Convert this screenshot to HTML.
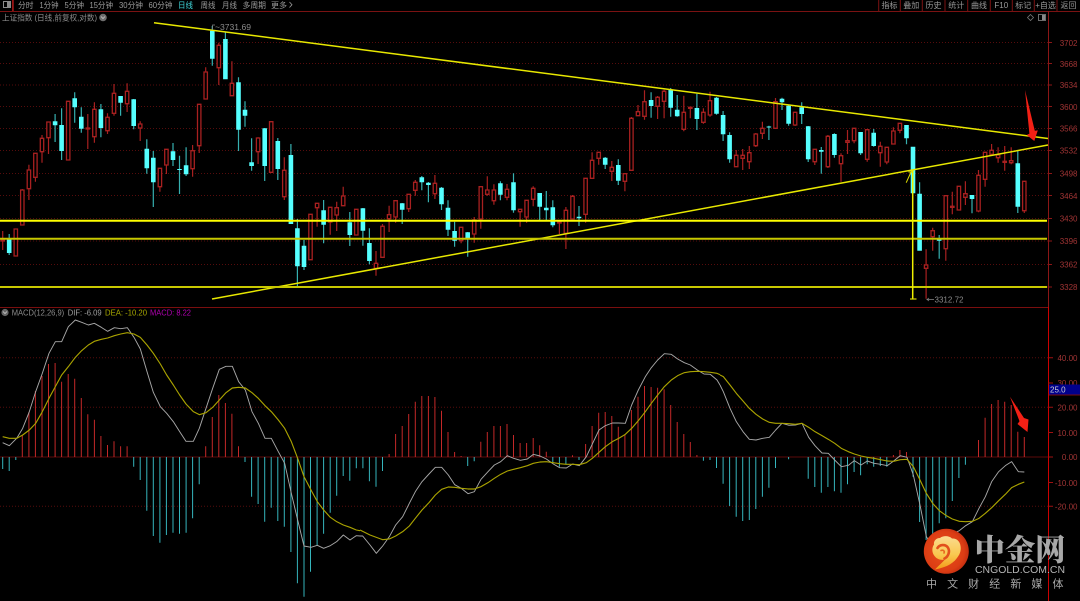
<!DOCTYPE html>
<html><head><meta charset="utf-8"><title>上证指数 MACD</title>
<style>
html,body{margin:0;padding:0;background:#000;width:1080px;height:601px;overflow:hidden}
svg{display:block}
text{font-family:"Liberation Sans","Noto Sans CJK SC",sans-serif;font-size:8px;fill:#999}
.a{fill:#a03434;text-anchor:end}
.b{text-anchor:middle}
</style></head><body>
<svg width="1080" height="601" viewBox="0 0 1080 601" xmlns="http://www.w3.org/2000/svg">
<defs>
<radialGradient id="lg" cx=".45" cy=".5" r=".55"><stop offset="0" stop-color="#e8501c"/><stop offset=".8" stop-color="#dc3d14"/><stop offset="1" stop-color="#c42e10"/></radialGradient>
<linearGradient id="ly" x1="0" y1="0" x2="0" y2="1"><stop offset="0" stop-color="#fbdc90"/><stop offset=".55" stop-color="#f9c850"/><stop offset="1" stop-color="#f39a18"/></linearGradient>
</defs>
<rect width="1080" height="601" fill="#000"/>
<!-- grid -->
<path d="M0 42.5H1048M0 63.5H1048M0 85H1048M0 106.5H1048M0 128.5H1048M0 150.5H1048M0 173.5H1048M0 195.5H1048M0 218.5H1048M0 241H1048M0 264.5H1048M0 287H1048M0 357.7H1048M0 407.3H1048M0 506.3H1048" stroke="#560c0c" stroke-width="1" stroke-dasharray="1 2" fill="none"/>
<path d="M0 457H1048" stroke="#5c0a0a" stroke-width="1"/>
<path d="M0 307.5H1048" stroke="#7a0e0e" stroke-width="1"/>
<path d="M0 11.5H1080" stroke="#7a1212" stroke-width="1"/>
<path d="M1048.5 11V307" stroke="#8b1616" stroke-width="1"/>
<path d="M1048.5 307V601" stroke="#cc0000" stroke-width="1"/>
<path d="M1048 42.5h4M1048 63.5h4M1048 85h4M1048 106.5h4M1048 128.5h4M1048 150.5h4M1048 173.5h4M1048 195.5h4M1048 218.5h4M1048 241h4M1048 264.5h4M1048 287h4" stroke="#8b1616" stroke-width="1"/>
<path d="M1048 357.7h5M1048 383h5M1048 407.3h5M1048 432.5h5M1048 457h5M1048 482.5h5M1048 506.3h5" stroke="#a01010" stroke-width="1"/>
<!-- top bar -->
<path d="M13.5 0V11M878.7 0V11M900.3 0V11M922.3 0V11M945 0V11M967.7 0V11M990.3 0V11M1012.3 0V11M1034.3 0V11M1057 0V11" stroke="#7a1212" stroke-width="1"/>
<path d="M12.5 0V11" stroke="#9a1212" stroke-width="1"/>
<rect x="3.5" y="1.5" width="7" height="6" fill="none" stroke="#8a8a8a"/><rect x="7" y="2" width="3" height="5" fill="#888"/>
<text x="18" y="8" textLength="15.5" lengthAdjust="spacingAndGlyphs">分时</text>
<text x="39.5" y="8" textLength="19" lengthAdjust="spacingAndGlyphs">1分钟</text>
<text x="64.5" y="8" textLength="19.5" lengthAdjust="spacingAndGlyphs">5分钟</text>
<text x="89.5" y="8" textLength="23.5" lengthAdjust="spacingAndGlyphs">15分钟</text>
<text x="119" y="8" textLength="24" lengthAdjust="spacingAndGlyphs">30分钟</text>
<text x="148.5" y="8" textLength="24" lengthAdjust="spacingAndGlyphs">60分钟</text>
<text x="178" y="8" textLength="15" lengthAdjust="spacingAndGlyphs" style="fill:#3fd8dc">日线</text>
<text x="200.5" y="8" textLength="15" lengthAdjust="spacingAndGlyphs">周线</text>
<text x="222" y="8" textLength="15" lengthAdjust="spacingAndGlyphs">月线</text>
<text x="242.5" y="8" textLength="23.5" lengthAdjust="spacingAndGlyphs">多周期</text>
<text x="271" y="8" textLength="16" lengthAdjust="spacingAndGlyphs">更多</text>
<path d="M289.5 2L292 4.7 289.5 7.5" stroke="#999" fill="none" stroke-width=".8"/>
<text class="b" x="889.5" y="8">指标</text>
<text class="b" x="911.3" y="8">叠加</text>
<text class="b" x="933.5" y="8">历史</text>
<text class="b" x="956.3" y="8">统计</text>
<text class="b" x="979" y="8">曲线</text>
<text class="b" x="1001.3" y="8">F10</text>
<text class="b" x="1023.3" y="8">标记</text>
<text class="b" x="1045.6" y="8">+自选</text>
<text class="b" x="1068.5" y="8">返回</text>
<text x="2" y="20.5" textLength="95" lengthAdjust="spacingAndGlyphs" style="fill:#8c8c8c">上证指数 (日线,前复权,对数)</text>
<circle cx="103" cy="17.5" r="3.8" fill="#6e6e6e"/><path d="M101 16.5l2 2 2-2" stroke="#ccc" stroke-width=".8" fill="none"/>
<path d="M1030.5 14.5l3 3-3 3-3-3z" fill="none" stroke="#777" stroke-width=".8"/>
<rect x="1038.5" y="14.5" width="7" height="6" fill="none" stroke="#888" stroke-width=".8"/><rect x="1042" y="15" width="3" height="5" fill="#888"/>
<!-- price labels -->
<text class="a" x="1077.5" y="46">3702</text><text class="a" x="1077.5" y="67">3668</text><text class="a" x="1077.5" y="88">3634</text><text class="a" x="1077.5" y="110">3600</text><text class="a" x="1077.5" y="131.5">3566</text><text class="a" x="1077.5" y="153.5">3532</text><text class="a" x="1077.5" y="176.5">3498</text><text class="a" x="1077.5" y="199">3464</text><text class="a" x="1077.5" y="221.5">3430</text><text class="a" x="1077.5" y="244">3396</text><text class="a" x="1077.5" y="267.5">3362</text><text class="a" x="1077.5" y="290">3328</text>
<text class="a" x="1077.5" y="361">40.00</text><text class="a" x="1077.5" y="386">30.00</text><text class="a" x="1077.5" y="410.5">20.00</text><text class="a" x="1077.5" y="436">10.00</text><text class="a" x="1077.5" y="460">0.00</text><text class="a" x="1077.5" y="486">-10.00</text><text class="a" x="1077.5" y="509.5">-20.00</text>
<rect x="1049" y="384.5" width="31" height="10" fill="#00008c"/><path d="M1049 395h31" stroke="#7a1010"/>
<text x="1050" y="392.5" style="fill:#cfcfcf">25.0</text>

<!-- red wicks -->
<path fill="none" stroke="#a82020" stroke-width="1.2" d="M2.7 231V250M22.3 189V225M28.9 164.7V200M35.4 153V181.7M42 135V162.7M48.5 122V154M87.8 114V149M94.4 102.3V142.7M107.5 113.3V134M114 84V115.7M127.1 83.3V112M140.2 121.3V141M159.9 168V191.7M166.4 149V174M192.6 145V176.7M199.2 104V153M205.7 67.3V99M218.8 42.7V85M231.9 61.3V95.7M258.1 137.3V164M284.3 157.3V200M317.1 203V226.7M330.2 207V234.7M336.7 201.7V231M343.2 186.7V205.7M376 251V275.7M382.5 224V257M389.1 205.7V232M395.6 200.7V222.7M408.7 194V212M415.3 180V195.7M434.9 175V199M461.1 227V243.3M474.2 217V242.7M480.8 186.7V228.7M487.3 176.3V195.7M493.9 184.3V204.7M507 184V200.3M520.1 209V226.7M526.6 200V222.7M533.2 186.3V206.3M559.4 221.7V234M565.9 207V249M572.5 195V219M585.6 178V222.7M592.1 152.3V178M598.7 152V164.7M611.8 161V181M624.9 173.7V191.3M631.4 117V170M638 105V115.7M644.5 90.3V119.7M657.6 96V119M664.1 89.7V118.3M683.8 95.7V131.3M690.3 107V118.3M703.4 108.3V123.7M710 91.7V116.7M736.2 150V167M742.7 149V170M749.3 146V169M755.8 133V147M762.4 121.7V139M775.5 98V128M795.1 111.7V126M814.8 149V165M827.9 135V168M841 153.3V181.7M847.5 130V154M854.1 128V143.3M867.2 129.7V161.7M880.3 141.7V166.7M886.8 147V164.3M893.4 127.3V144M899.9 123V133.3M926.1 249.3V298.7M932.7 227.7V250.7M945.8 195.7V260.7M952.3 191.7V214.3M965.4 181.3V205M978.5 170V212.3M985.1 152V186.7M991.6 144V155.7M998.1 147.3V162.7M1004.7 146V170.7M1011.2 147.3V164.3M1024.3 181V213"/>
<!-- cyan wicks -->
<path fill="none" stroke="#36b0b0" stroke-width="1.2" d="M9.2 234V255M55.1 114V142M61.6 108.3V160M74.7 92.3V122.7M81.3 107.3V132.7M100.9 104V137.3M120.6 96V115.7M133.7 99V129.3M146.8 139.3V173.7M153.3 151V207M173 143V166M179.5 155.7V194M186.1 147.3V176M212.3 26V65.7M225.4 32.3V40M238.5 77.3V151M245 101.3V126.7M251.6 138.3V170.7M264.7 128V181M277.8 138V180M290.9 144V155M297.4 219V286.7M304 240V270M323.6 200V243.3M349.8 212V246M362.9 208V245.7M369.4 228.3V264.3M402.2 203V224M421.8 176V190.3M428.4 182V202.3M441.5 187V210M448 200.3V236M454.6 221.7V246.7M467.7 232V256.7M500.4 181.3V200.3M513.5 173.3V212.7M539.7 193V220M546.3 191V220M552.8 200.3V227.3M579 206V226M605.2 157V169M618.3 159.3V185M651.1 92.3V117.7M670.7 88V116.7M677.2 95V116.7M696.9 93.7V130M716.5 97V114.7M723.1 111V141M729.6 132.3V162.7M768.9 125.7V140M782 97.7V110M788.6 105V125.7M801.7 102.3V124M808.2 126V162M821.3 147V173.7M834.4 133.3V157.7M860.6 132V155M873.7 129V146.7M906.5 125V144.3M919.6 182.3V194M939.2 235V258.7M972 195V213.3M1017.8 151V213"/>
<!-- red bodies -->
<path transform="translate(-1.7,0)" fill="#000" stroke="#a82020" stroke-width="1.3" d="M2.7 240h3.4V241h-3.4zM15.8 229h3.4V256h-3.4zM22.3 190h3.4V225h-3.4zM28.9 170h3.4V188.7h-3.4zM35.4 153.3h3.4V177.3h-3.4zM42 138.3h3.4V151.7h-3.4zM48.5 122h3.4V137.7h-3.4zM68.2 101.3h3.4V160h-3.4zM87.8 128h3.4V129h-3.4zM94.4 109.3h3.4V136.7h-3.4zM107.5 117.3h3.4V130.7h-3.4zM114 93.3h3.4V113.3h-3.4zM127.1 91.3h3.4V103.7h-3.4zM140.2 124h3.4V128h-3.4zM159.9 168.3h3.4V186.7h-3.4zM166.4 149.3h3.4V165h-3.4zM192.6 150.7h3.4V168.7h-3.4zM199.2 104.3h3.4V145.7h-3.4zM205.7 72h3.4V99h-3.4zM218.8 45.3h3.4V67.7h-3.4zM231.9 83.3h3.4V95.7h-3.4zM258.1 138h3.4V151.7h-3.4zM271.2 121.7h3.4V172.3h-3.4zM284.3 170.3h3.4V196.7h-3.4zM310.5 214.3h3.4V259.7h-3.4zM317.1 203.3h3.4V207.7h-3.4zM330.2 207.3h3.4V222h-3.4zM336.7 207.7h3.4V215h-3.4zM343.2 196h3.4V205.7h-3.4zM356.3 209.3h3.4V235h-3.4zM376 263.3h3.4V268.3h-3.4zM382.5 226.3h3.4V257.3h-3.4zM389.1 214.7h3.4V218.7h-3.4zM395.6 200.7h3.4V217h-3.4zM408.7 194.3h3.4V208.7h-3.4zM415.3 182.3h3.4V190.3h-3.4zM434.9 183.3h3.4V193.7h-3.4zM461.1 227.3h3.4V240.7h-3.4zM474.2 220h3.4V234h-3.4zM480.8 186.7h3.4V219h-3.4zM487.3 190h3.4V194.3h-3.4zM493.9 190h3.4V200.7h-3.4zM507 189.3h3.4V197.3h-3.4zM520.1 209.3h3.4V211.7h-3.4zM526.6 200.3h3.4V217h-3.4zM533.2 188.3h3.4V199.3h-3.4zM559.4 221.7h3.4V223h-3.4zM565.9 210.3h3.4V233.3h-3.4zM572.5 196.3h3.4V219h-3.4zM585.6 178.3h3.4V214.3h-3.4zM592.1 160.3h3.4V178.3h-3.4zM598.7 152.3h3.4V158.3h-3.4zM611.8 167.3h3.4V171.3h-3.4zM624.9 173.7h3.4V181.3h-3.4zM631.4 118.3h3.4V170.3h-3.4zM638 111.7h3.4V115.7h-3.4zM644.5 101.7h3.4V116.3h-3.4zM657.6 97.3h3.4V106.3h-3.4zM664.1 91.3h3.4V101.3h-3.4zM683.8 112.3h3.4V129.3h-3.4zM690.3 107.3h3.4V108.3h-3.4zM703.4 112.3h3.4V122.3h-3.4zM710 100.7h3.4V115h-3.4zM736.2 155.3h3.4V166.7h-3.4zM742.7 155.3h3.4V158.3h-3.4zM749.3 152.7h3.4V161.7h-3.4zM755.8 134h3.4V145.7h-3.4zM762.4 128.3h3.4V133.3h-3.4zM775.5 101.7h3.4V128.3h-3.4zM795.1 112.3h3.4V125h-3.4zM814.8 149.3h3.4V161.7h-3.4zM827.9 136.3h3.4V166.7h-3.4zM841 155.7h3.4V163.7h-3.4zM847.5 140.7h3.4V142.3h-3.4zM854.1 128.3h3.4V140.7h-3.4zM867.2 129.7h3.4V159.3h-3.4zM880.3 146.3h3.4V152.7h-3.4zM886.8 147.3h3.4V162h-3.4zM893.4 131h3.4V144h-3.4zM899.9 123.3h3.4V130.3h-3.4zM926.1 265h3.4V268.3h-3.4zM932.7 230.7h3.4V236.7h-3.4zM945.8 195.7h3.4V248.7h-3.4zM952.3 206.3h3.4V207.3h-3.4zM958.9 186.3h3.4V210h-3.4zM965.4 193.7h3.4V197.3h-3.4zM978.5 175.3h3.4V211h-3.4zM985.1 152.3h3.4V179.3h-3.4zM991.6 150.3h3.4V154.3h-3.4zM998.1 155h3.4V157.7h-3.4zM1004.7 161.3h3.4V162.3h-3.4zM1011.2 160.7h3.4V162.7h-3.4zM1024.3 181.3h3.4V210.7h-3.4z"/>
<!-- cyan bodies -->
<path fill="none" stroke="#55ffff" stroke-width="4.6" d="M9.2 239V253M55.1 121.3V125.3M61.6 125V151M74.7 98.3V107.3M81.3 116.7V128.7M100.9 109.3V128M120.6 96V102.7M133.7 99.3V126M146.8 148.7V168.3M153.3 157.7V182.3M173 151.3V160M179.5 169V170M186.1 165.3V174.3M212.3 30.7V58.7M225.4 39V79.3M238.5 82.3V129.7M245 109.7V115.7M251.6 162.3V166M264.7 128.3V166M277.8 141V169M290.9 155V224M297.4 228.3V266.3M304 245.7V267M323.6 210.3V224.7M349.8 222.3V235M362.9 208.3V230.7M369.4 243V261M402.2 203.3V209.7M421.8 177.3V182.3M428.4 182.7V185M441.5 187.7V204.3M448 207.7V229.7M454.6 231V240.7M467.7 232.3V238.7M500.4 183.3V194.7M513.5 182.3V210.3M539.7 193V206.7M546.3 207.7V210.3M552.8 207.3V225.3M579 216.7V218.3M605.2 157.7V164.7M618.3 165V180.7M651.1 100V106M670.7 89.7V107.7M677.2 109.7V116.3M696.9 108V119M716.5 97.7V113.7M723.1 115V134.3M729.6 135V159.3M768.9 126.5V127.5M782 98.7V102.3M788.6 105.7V123.7M801.7 107.3V114M808.2 126.3V159.3M821.3 150V151.7M834.4 134V155M860.6 132V153.3M873.7 132.7V146M906.5 125V138.3M913 146.7V193.3M919.6 193.7V250.7M939.2 239.3V240.7M972 195V199M1017.8 163.3V206.7"/>
<!-- yellow trend lines -->
<path d="M154 22.7L1048 138.5" stroke="#e8e800" stroke-width="1.5" fill="none"/>
<path d="M212 299L1048 145" stroke="#e8e800" stroke-width="1.5" fill="none"/>
<path d="M0 220.7H1047" stroke="#ffff00" stroke-width="2" fill="none"/>
<path d="M0 238.8H1047M0 287H1047" stroke="#c8c800" stroke-width="2" fill="none"/>
<path d="M912.7 170.5V299" stroke="#f0f000" stroke-width="1.5" fill="none"/>
<path d="M910 299h6.5" stroke="#d8d800" stroke-width="1.2" fill="none"/>
<path d="M906.2 182.7L911.5 171M908.5 172h4.5" stroke="#e0e000" stroke-width="1" fill="none"/>
<!-- annotations -->
<path d="M212.5 30V25h2.5" stroke="#888" stroke-width=".7" fill="none"/>
<text x="215" y="30" textLength="36" lengthAdjust="spacingAndGlyphs" style="fill:#8a8a8a">~3731.69</text>
<path d="M934 299.5h-7l2-1.5m-2 1.5l2 1.5" stroke="#888" stroke-width=".7" fill="none"/>
<text x="934.5" y="302.5" textLength="29" lengthAdjust="spacingAndGlyphs" style="fill:#8a8a8a">3312.72</text>
<!-- MACD legend -->
<circle cx="5" cy="312.5" r="3.6" fill="#666"/><path d="M3 311.5l2 2 2-2" stroke="#ccc" stroke-width=".8" fill="none"/>
<text x="11.7" y="315.3" textLength="52.5" lengthAdjust="spacingAndGlyphs" style="fill:#8c8c8c">MACD(12,26,9)</text>
<text x="67.7" y="315.3" textLength="34" lengthAdjust="spacingAndGlyphs" style="fill:#a0a0a0">DIF: -6.09</text>
<text x="105" y="315.3" textLength="42" lengthAdjust="spacingAndGlyphs" style="fill:#a8a800">DEA: -10.20</text>
<text x="150" y="315.3" textLength="41" lengthAdjust="spacingAndGlyphs" style="fill:#b000b0">MACD: 8.22</text>
<!-- MACD bars -->
<path fill="none" stroke="#c42828" stroke-width="1" d="M22.3 457V435M28.9 457V411.7M35.4 457V391M42 457V376M48.5 457V364M55.1 457V363M61.6 457V381.7M68.2 457V374M74.7 457V378.7M81.3 457V398M87.8 457V414.3M94.4 457V419.7M100.9 457V436M107.5 457V445M114 457V441.3M120.6 457V446.3M127.1 457V446.3M205.7 457V446.3M212.3 457V417M218.8 457V395M225.4 457V403M231.9 457V413.7M238.5 457V446.3M389.1 457V454M395.6 457V434M402.2 457V426M408.7 457V414M415.3 457V401.7M421.8 457V396M428.4 457V396M434.9 457V397M441.5 457V410.7M448 457V432M454.6 457V452M461.1 457V456M480.8 457V441.7M487.3 457V432M493.9 457V426M500.4 457V426M507 457V424M513.5 457V435M520.1 457V443M526.6 457V443M533.2 457V438M539.7 457V445.3M546.3 457V451.7M572.5 457V455.3M585.6 457V444M592.1 457V426M598.7 457V412.7M605.2 457V412M611.8 457V416M618.3 457V426.7M624.9 457V435M631.4 457V410M638 457V396.7M644.5 457V386M651.1 457V387M657.6 457V387.7M664.1 457V389.3M670.7 457V405M677.2 457V422M683.8 457V434M690.3 457V442M696.9 457V455M893.4 457V455M899.9 457V450M906.5 457V452M978.5 457V440M985.1 457V417.7M991.6 457V404M998.1 457V400M1004.7 457V401.7M1011.2 457V405M1017.8 457V431.7M1024.3 457V437"/>
<path fill="none" stroke="#35b5bc" stroke-width="1" d="M2.7 457V469M9.2 457V471M15.8 457V460M133.7 457V466.7M140.2 457V480M146.8 457V510.7M153.3 457V536M159.9 457V542.7M166.4 457V535M173 457V532.7M179.5 457V533.7M186.1 457V532.7M192.6 457V518.3M199.2 457V484.3M245 457V462M251.6 457V496.7M258.1 457V504M264.7 457V521.7M271.2 457V507.7M277.8 457V521M284.3 457V526.7M290.9 457V552M297.4 457V583.3M304 457V596.7M310.5 457V571.7M317.1 457V545.7M323.6 457V533.7M330.2 457V512.7M336.7 457V495.7M343.2 457V476M349.8 457V480.7M356.3 457V468.3M362.9 457V468.3M369.4 457V481.3M376 457V486.7M382.5 457V471M467.7 457V466M474.2 457V461.3M552.8 457V462.7M559.4 457V466.7M565.9 457V464M579 457V460M703.4 457V460.7M710 457V460M716.5 457V468M723.1 457V483.7M729.6 457V506M736.2 457V516.7M742.7 457V521M749.3 457V520M755.8 457V509M762.4 457V496.7M768.9 457V487.7M775.5 457V468M788.6 457V459.3M808.2 457V478.7M814.8 457V487M821.3 457V492.7M827.9 457V487M834.4 457V491.3M841 457V492.7M847.5 457V484.3M854.1 457V472M860.6 457V475.3M867.2 457V464.3M873.7 457V466.7M880.3 457V466M886.8 457V466.7M913 457V476.7M919.6 457V522M926.1 457V540M932.7 457V536.7M939.2 457V523.3M945.8 457V518.3M952.3 457V501M958.9 457V478M965.4 457V464.7"/>
<!-- DIF -->
<g fill="none" stroke="#a8a8a8" stroke-width="2.8" stroke-linejoin="round">
<polyline transform="translate(0,320) scale(.33333)" points="8,368 28,377 50,355 68,325 88,275 107,215 127,160 147,100 166,65 185,65 205,20 226,0 245,7 265,15 283,10 304,22 323,34 343,23 362,26 382,23 402,52 421,87 441,155 460,217 481,260 500,280 520,305 539,335 558,364 580,364 598,325 618,265 638,205 658,148 678,139 697,139 716,185 736,210 756,275 775,310 795,355 814,355 835,395 854,430 874,520 893,600 912,678 933,682 952,676 971,685 991,677 1010,665 1030,645 1050,660 1069,647 1080,648"/>
<polyline transform="translate(360,320) scale(.33333)" points="0,648 8,648 30,675 49,700 68,678 88,650 107,615 128,590 148,550 166,515 186,485 207,462 226,442 245,442 265,465 284,494 304,505 324,521 343,515 363,478 384,455 403,435 422,425 442,407 461,415 481,421 502,417 520,403 540,408 559,417 580,432 599,443 619,444 638,432 658,437 679,410 697,372 717,330 736,317 757,309 776,309 796,310 815,255 835,210 856,170 874,143 893,120 913,101 934,103 953,117 973,128 991,135 1012,150 1032,162 1051,163 1071,180 1080,195"/>
<polyline transform="translate(720,320) scale(.33333)" points="0,195 10,215 30,265 49,305 69,335 88,358 108,360 128,355 148,352 167,330 186,310 207,316 226,315 246,310 266,352 285,377 306,399 325,400 344,420 364,440 385,436 403,422 423,435 442,423 462,430 482,433 502,437 521,423 541,407 561,412 580,465 600,555 619,650 638,680 660,690 680,670 700,640 718,632 737,617 757,605 777,565 796,530 815,485 836,455 856,437 875,425 895,455 913,456"/>
</g>
<!-- DEA -->
<g fill="none" stroke="#aaa300" stroke-width="3.4" stroke-linejoin="round">
<polyline transform="translate(0,320) scale(.33333)" points="8,350 28,355 50,355 68,345 88,330 107,310 127,275 147,235 166,200 185,165 205,140 226,112 245,92 265,75 283,64 304,58 323,54 343,47 362,42 382,38 402,42 421,52 441,75 460,100 481,132 500,165 520,195 539,225 558,252 580,275 598,284 618,278 638,262 658,240 678,218 697,204 716,202 736,204 756,218 775,235 795,257 814,275 835,300 854,325 874,365 893,415 912,470 933,510 952,545 971,570 991,592 1010,605 1030,615 1050,622 1069,630 1080,632"/>
<polyline transform="translate(360,320) scale(.33333)" points="0,630 30,645 68,659 88,657 107,648 128,635 148,618 166,595 186,570 207,548 226,525 245,508 265,501 284,502 304,505 324,507 343,507 363,500 384,488 403,475 422,463 442,453 461,448 481,443 502,437 520,430 540,426 559,425 580,428 599,431 619,433 638,433 658,434 679,428 697,415 717,397 736,380 757,365 776,355 796,343 815,325 835,302 856,275 874,250 893,225 913,200 934,180 953,167 973,158 991,155 1012,154 1032,155 1051,157 1071,160 1080,164"/>
<polyline transform="translate(720,320) scale(.33333)" points="0,165 10,170 30,195 49,220 69,243 88,265 108,283 128,297 148,307 167,310 186,310 207,311 226,313 246,310 266,322 285,335 306,347 325,358 344,370 364,385 385,395 403,402 423,408 442,412 462,415 482,419 502,423 521,424 541,419 561,418 580,440 600,480 619,520 638,550 658,572 679,587 697,597 718,604 737,605 757,604 777,595 796,580 815,563 836,542 856,523 875,503 895,493 913,486"/>
</g>
<!-- red arrows -->
<path d="M1025 90L1034.8 130.8L1037.8 130.4L1034.3 141L1026.7 135L1029.4 133.6Z" fill="#f32015"/>
<path d="M1010 396.7L1024 418L1028.5 419.5L1027.5 432L1017.5 424L1019.5 421.2Z" fill="#f32015"/>
<!-- logo -->
<circle cx="946.3" cy="551.3" r="22.5" fill="url(#lg)"/>
<path d="M935 569.5C943 568 952 565 957 558C961 553 961 549 960.5 546C960 541 956 538 952 538.5C949 535.5 943 535.5 940 538C936 538 933.5 541 934 544.5C931.5 548 932 553 934.5 556C937 559.5 941.5 560.5 945 559.5C942 563 938 566 935 569.5Z" fill="url(#ly)"/>
<path d="M937.5 548C939.5 544.5 945 544 947.5 547C950.5 551 948.5 556.5 944.5 558.5" fill="none" stroke="#e2501c" stroke-width="2.6" stroke-linecap="round"/>
<path d="M941 550.5C943 549.5 945 551 944 553" fill="none" stroke="#e86a20" stroke-width="1.6" stroke-linecap="round"/>
<text x="974.5" y="560.5" textLength="91" lengthAdjust="spacingAndGlyphs" style="font-family:'Noto Serif CJK SC','Liberation Serif',serif;font-weight:900;font-size:30px;fill:#a8a8a8">中金网</text>
<text x="975" y="573" textLength="90" lengthAdjust="spacingAndGlyphs" style="font-size:10.5px;fill:#b4b4b4">CNGOLD.COM.CN</text>
<text x="926" y="587.5" textLength="137.5" style="font-size:11px;fill:#a8a8a8">中文财经新媒体</text>
</svg>
</body></html>
